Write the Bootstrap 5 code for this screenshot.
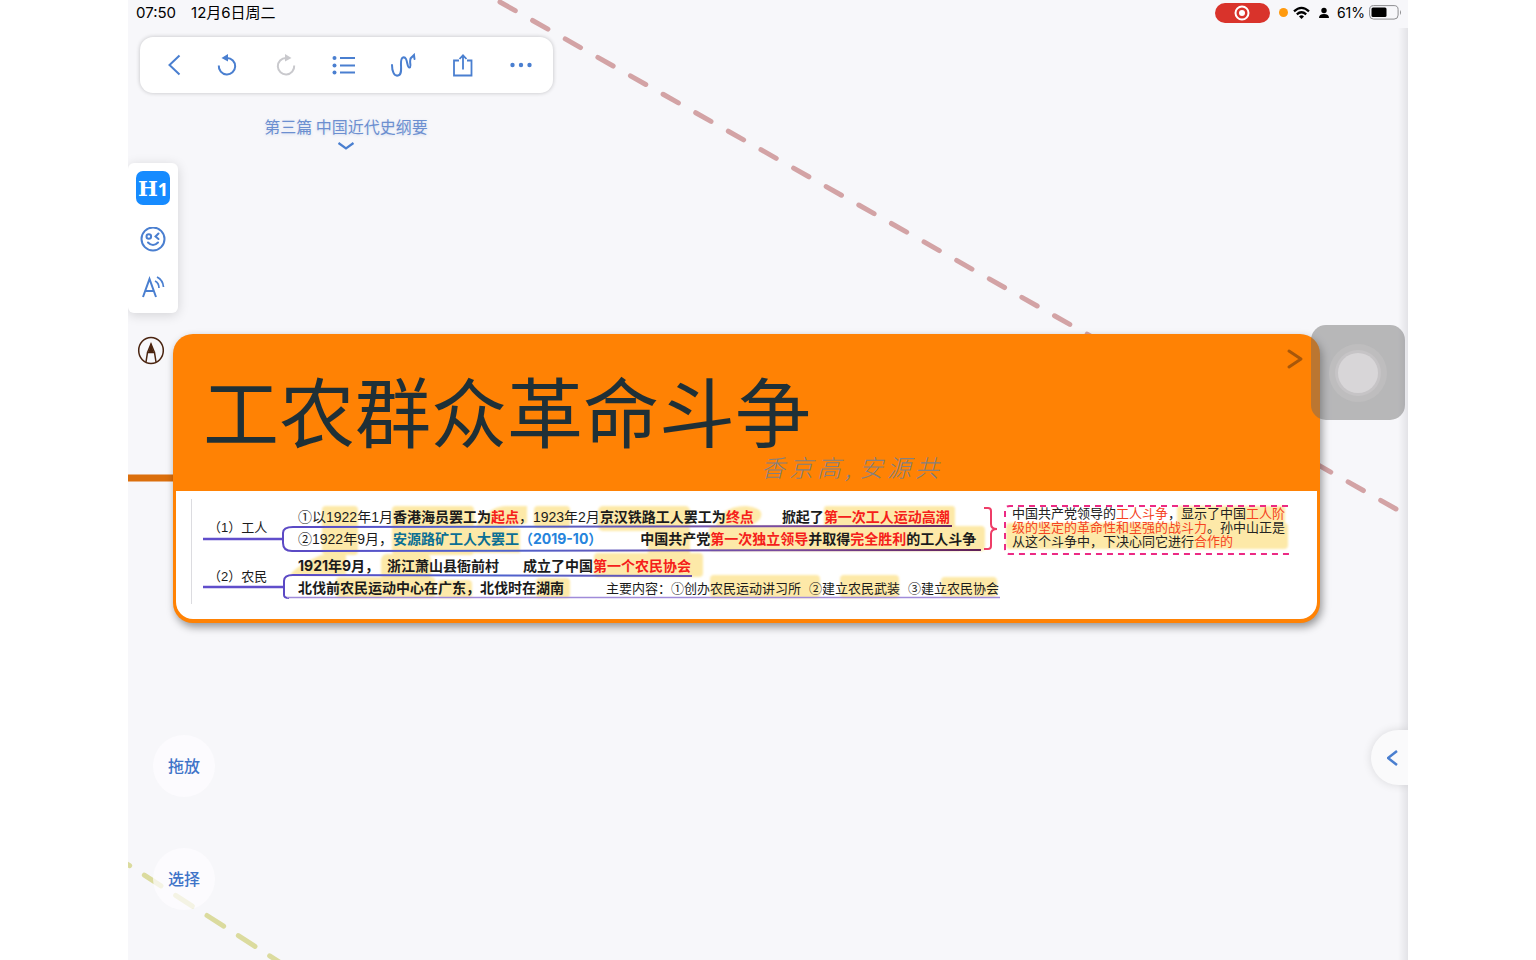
<!DOCTYPE html>
<html lang="zh-CN">
<head>
<meta charset="utf-8">
<meta name="viewport" content="width=device-width, initial-scale=1">
<title>第三篇 中国近代史纲要</title>
<link href="https://cdn.jsdelivr.net/npm/bootstrap@5.3.0/dist/css/bootstrap.min.css" rel="stylesheet">
<style>
  :root { --ink: #4a7fd0; --node: #ff8204; --marker: #fde9a8; }
  body { font-family: "Liberation Sans", "Noto Sans CJK SC", sans-serif; background: #fff; }
  svg { display: block; }
  .board { background: #f7f7fa; overflow: hidden; }
  .board-edge { top: 28px; right: 0; bottom: 0; width: 10px; background: linear-gradient(to left, #e3e3e7, #f7f7fa00); }
  .links { inset: 0; width: 100%; height: 100%; pointer-events: none; }
  .bare { border: 0; background: none; padding: 0; line-height: 1; color: var(--ink); }

  .status { font-family: Inter, "Noto Sans CJK SC", sans-serif; font-size: 14px; line-height: 25px; color: #000; padding: 0 6px 0 8px; }
  .clock { font-size: 15px; gap: 15px; }
  .rec { width: 55px; height: 20px; background: #d9332b; }
  .mic { width: 9px; height: 9px; margin-left: 9px; background: #ff9a0e; }

  .tools { width: 413px; height: 56px; margin: 12px 0 0 12px; padding: 0 20px 0 17px; background: #fff; border-radius: 13px; box-shadow: 0 0 4px #00000038; }
  .doc-title { width: 170px; margin: 23px 0 0 133px; font-size: 16px; line-height: 20px; color: #6c8fd0; text-shadow: 0 1px 3px #6c8fd040; font-family: "Noto Sans CJK SC", sans-serif; }
  .rail { width: 50px; height: 150px; margin-top: 9px; padding: 8px 0 13px; background: #fff; border-radius: 6px; box-shadow: 0 2px 12px #00000026; }
  .h1-key { width: 34px; height: 34px; border-radius: 7px; background: #168bff; color: #fff; font-family: "DejaVu Serif", serif; font-weight: 700; font-size: 21px; }
  .h1-key small { font-family: "Open Sans", sans-serif; font-weight: 700; font-size: 18px; }
  .pen { margin: 23px 0 0 9px; }

  .topic { left: 45px; right: 88px; top: 334px; background: var(--node); border-radius: 20px; padding: 0 3px 4px; box-shadow: 2px 4px 8px #00000066; }
  .topic-head { height: 157px; padding: 20px 27px 0; }
  .topic-head h1 { font-family: "Noto Sans CJK SC", sans-serif; font-weight: 400; font-size: 76px; line-height: 110px; color: #1f3037; }
  .fold { top: 14px; right: 16px; color: #a8570a; }
  .scribble { left: 588px; top: 117px; gap: 4px; font-family: "Noto Sans CJK SC", sans-serif; font-weight: 300; font-style: italic; font-size: 24px; line-height: 32px; color: #85807f; }
  .scribble .pause { width: 10px; }
  .topic-body { height: 128px; background: #fff; border-radius: 0 0 17px 17px; color: #1b1b1b; }
  .paper { left: 0; top: 0; width: 1141px; height: 128px; }
  .notes { padding: 15px 0 0 27px; white-space: nowrap; font-size: 14px; line-height: 22px; }
  .labels { width: 95px; line-height: 24px; font-size: 13px; }
  .labels div { height: 49px; padding: 10px 0 0 5px; }
  .facts { width: 706px; }
  .facts div { height: 22px; }
  .facts .late { margin-top: 5px; }
  .facts .fine { font-size: 13px; }
  .facts b, .strong { font-weight: 700; }
  .wide-num { font-family: Inter, "Noto Sans CJK SC", sans-serif; }
  .gap-s { margin-left: 8px; }
  .gap-m { margin-left: 24px; }
  .gap-l { margin-left: 28px; }
  .gap-xl { margin-left: 38px; }
  .hot { color: #f5201a; }
  .sea { color: #0b6f94; }
  .sky { color: #2584dd; }
  .aside { font-size: 13px; line-height: 14px; padding: 1px 0 0 8px; color: #222; }
  .aside .hot { color: #f5431f; }

  .assist { right: 3px; top: 325px; width: 94px; height: 95px; border-radius: 15px; background: #68686873; }
  .assist span { width: 40px; height: 40px; background: #d8d6d8; box-shadow: 0 0 0 3px #c6c4c6, 0 0 0 9px #bebdbe; }
  .round { width: 62px; height: 62px; background: #fdfcffb8; color: #3f74c8; font-family: "Noto Sans CJK SC", sans-serif; font-size: 16px; font-weight: 500; padding-bottom: 2px; }
  .acts { left: 25px; bottom: 50px; gap: 51px; }
  .drawer { right: 0; top: 730px; width: 37px; height: 55px; border-radius: 28px 0 0 28px; background: #fafafb; box-shadow: 0 0 10px #0000001f; }
</style>
</head>
<body>
<div class="row g-0 justify-content-center">
<main class="board col-10 position-relative vh-100">
  <svg class="links position-absolute" fill="none" stroke-linecap="round">
    <line x1="372" y1="2" x2="1268" y2="509" stroke="#d3a3a5" stroke-width="5" pathLength="879" stroke-dasharray="15 17"/>
    <line x1="-15" y1="855" x2="173" y2="976" stroke="#dbdb9e" stroke-width="5" pathLength="192" stroke-dasharray="17 15"/>
    <path d="M0 478H48" stroke="#db6f0c" stroke-width="7"/>
  </svg>

  <header class="status d-flex align-items-center position-relative">
    <div class="clock d-flex"><span>07:50</span><span>12月6日周二</span></div>
    <span class="rec rounded-pill ms-auto d-flex align-items-center justify-content-center">
      <svg width="16" height="16" fill="none" stroke="#fff" stroke-width="2"><circle cx="8" cy="8" r="6.5"/><circle cx="8" cy="8" r="3" fill="#fff" stroke="none"/></svg>
    </span>
    <span class="mic rounded-circle"></span>
    <svg class="ms-1" width="19" height="14" viewBox="0 0 19 14" fill="none" stroke="#000" stroke-width="2.2"><path d="M2 5.400Q9.500-1.600 17 5.400M4.800 8.400Q9.500 4.100 14.200 8.400"/><path d="M7 10.400Q9.500 8.300 12 10.400L9.500 13Z" fill="#000" stroke="none"/></svg>
    <svg class="ms-2" width="10" height="12" viewBox="0 0 10 12"><circle cx="5" cy="3.500" r="2.700"/><path d="M0 11Q0 7 5 7T10 11Z"/></svg>
    <span class="ms-1 ps-1">61%</span>
    <svg class="ms-1" width="33" height="15" viewBox="0 0 33 15"><rect x=".6" y=".6" width="28.500" height="13.500" rx="4" fill="none" stroke="#8d8d90"/><rect x="2.500" y="2.500" width="15" height="9.500" rx="1.500"/><path d="M31 5Q33 7.300 31 10Z" fill="#8d8d90"/></svg>
  </header>

  <nav class="tools d-flex align-items-center justify-content-between position-relative" aria-label="工具栏">
    <button class="bare" aria-label="返回"><svg width="24" height="24" fill="none" stroke="currentColor" stroke-width="2"><path d="M22.500 2.500 12.500 12 22.500 21.500"/></svg></button>
    <button class="bare" aria-label="撤销"><svg width="24" height="24" fill="none" stroke="currentColor" stroke-width="2"><path d="M3.800 12.500A8.200 8.200 0 1 0 12 5H10"/><path d="M13 1V8.500L6.500 5Z" fill="currentColor" stroke="none"/></svg></button>
    <button class="bare" aria-label="重做" style="color:#c9c9cd"><svg width="24" height="24" fill="none" stroke="currentColor" stroke-width="2"><path d="M20.200 12.500A8.200 8.200 0 1 1 12 5H14"/><path d="M11 1V8.500L17.500 5Z" fill="currentColor" stroke="none"/></svg></button>
    <button class="bare" aria-label="大纲"><svg width="24" height="24" stroke="currentColor" stroke-width="2"><path d="M8 5H23M8 12.500H23M8 19.500H23"/><g fill="currentColor" stroke="none"><circle cx="2.500" cy="5" r="2"/><circle cx="2.500" cy="12.500" r="2"/><circle cx="2.500" cy="19.500" r="2"/></g></svg></button>
    <button class="bare" aria-label="手写"><svg width="26" height="24" fill="none" stroke="currentColor" stroke-width="2" stroke-linecap="round"><path d="M2 12C2 18 4 23.500 8 22.500C14.500 21 8 6 13 4.500C18 3 16.500 15 19.500 14.500C22.500 14 17 5 23 3.500M20.500 5.500 24 2 24.500 6"/></svg></button>
    <button class="bare" aria-label="分享"><svg width="24" height="24" fill="none" stroke="currentColor" stroke-width="1.800"><path d="M8 7.500H3V22.500H20.500V7.500H16M12 16.500V2.500M8.500 6 12 2.300 15.500 6"/></svg></button>
    <button class="bare" aria-label="更多"><svg width="24" height="24" fill="currentColor"><circle cx="3.500" cy="12" r="2.200"/><circle cx="12" cy="12" r="2.200"/><circle cx="20.500" cy="12" r="2.200"/></svg></button>
  </nav>

  <button class="bare doc-title d-block text-nowrap position-relative">第三篇 中国近代史纲要
    <svg class="mx-auto" width="18" height="18" fill="none" stroke="#4a7fd0" stroke-width="2.200"><path d="M1.500 7 9 12.500 16.500 7"/></svg>
  </button>

  <aside class="rail d-flex flex-column align-items-center justify-content-between position-relative">
    <button class="bare h1-key text-nowrap" aria-label="一级标题">H<small>1</small></button>
    <button class="bare" aria-label="表情"><svg width="26" height="26" fill="none" stroke="currentColor" stroke-width="2"><circle cx="13" cy="12" r="11.500"/><circle cx="8.800" cy="9.500" r="2.300"/><path d="M18.500 6.500 15.500 9.500 18.500 12M8 15.500Q13 20.500 18 15.500" stroke-linecap="round"/></svg></button>
    <button class="bare" aria-label="朗读"><svg width="26" height="26" fill="none" stroke="currentColor" stroke-width="2"><path d="M3 23 9.500 5 16 23M5.500 17H13.500"/><path d="M15 7Q19 9 19 14M17 3Q23 6 23.500 13" stroke-width="1.700"/></svg></button>
  </aside>

  <button class="bare pen d-block position-relative" aria-label="画笔"><svg width="28" height="29" fill="none" stroke="#4a2410" stroke-width="1.500"><ellipse cx="14" cy="14.500" rx="12.300" ry="13"/><path d="M9 26 10.500 16.500H17.500L19 26M10.500 16.500 14 8 17.500 16.500"/><path d="M14 7 16.500 16H11.500Z" fill="#4a2410" stroke="none"/></svg></button>

  <article class="topic position-absolute">
    <div class="topic-head"><h1 class="m-0 text-nowrap">工农群众革命斗争</h1></div>
    <button class="bare fold position-absolute" aria-label="展开"><svg width="18" height="22" fill="none" stroke="currentColor" stroke-width="3" stroke-linecap="round" stroke-linejoin="round"><path d="M3 3 15 11 3 19"/></svg></button>
    <div class="scribble position-absolute d-flex"><span>香</span><span>京</span><span>高</span><span class="pause">,</span><span>安</span><span>源</span><span>共</span></div>
    <div class="topic-body position-relative">
      <svg class="paper position-absolute" fill="none">
        <defs><filter id="soft" x="-5%" y="-5%" width="110%" height="110%"><feGaussianBlur stdDeviation="1"/></filter>
        <linearGradient id="rule" gradientUnits="userSpaceOnUse" x1="100" x2="824" y1="0" y2="0"><stop stop-color="#5c48c4"/><stop offset=".3" stop-color="#4e63cf"/><stop offset=".7" stop-color="#7a4a9e"/><stop offset="1" stop-color="#5d1b50"/></linearGradient></defs>
        <path d="M15.500 8V113" stroke="#dcdce0"/>
        <g fill="#fde9a8" filter="url(#soft)">
          <rect x="146" y="15" width="36" height="49" rx="4"/><rect x="216" y="15" width="82" height="49" rx="4"/><path d="M298 38Q312 15 330 15H351V32L326 38V62H298Z"/>
          <rect x="358" y="15" width="36" height="22" rx="4"/><rect x="422" y="15" width="92" height="25" rx="5"/><path d="M540 35Q545 15 570 15Q590 17 584 28Q575 38 550 39Z"/>
          <rect x="648" y="15" width="131" height="22" rx="3"/><rect x="298" y="38" width="46" height="24"/><rect x="472" y="38" width="42" height="24"/><rect x="533" y="35" width="276" height="25" rx="4"/>
          <path d="M114 84Q120 75 145 64H170V84Z"/><rect x="205" y="63" width="50" height="26" rx="6"/><rect x="418" y="62" width="109" height="24" rx="4"/>
          <rect x="160" y="86" width="99" height="21" rx="4"/><rect x="262" y="89" width="34" height="18" rx="4"/><rect x="360" y="87" width="34" height="20" rx="4"/>
          <rect x="534" y="84" width="110" height="23" rx="4"/><rect x="664" y="84" width="59" height="23" rx="4"/><rect x="765" y="86" width="56" height="20" rx="4"/>
          <rect x="1001" y="15" width="108" height="20" rx="3"/><rect x="830" y="32" width="282" height="26" rx="4"/>
        </g>
        <g stroke="url(#rule)" stroke-width="2"><path d="M27 48H107M27 96H107" stroke="#604ecb" stroke-width="2.500"/><path d="M776 35 117 36Q107 36 107 42V52Q107 60 116 60L805 59M516 85 117 84Q108 84 108 90V104Q108 107 113 107"/><path d="M111 106.500H824" stroke="#a08bd9" stroke-width="1.500"/></g>
        <path d="M808 17H812Q815 17 815 20V33Q815 38 821 38Q815 38 815 43V55Q815 58 812 58H808" stroke="#ee3d67" stroke-width="2"/>
        <path d="M1112 15H834Q829 15 829 20V59Q829 63 834 63H1114" stroke="#ec2a84" stroke-width="2" stroke-dasharray="6 5"/>
      </svg>
      <div class="notes d-flex position-relative">
        <div class="labels"><div>（1）工人</div><div>（2）农民</div></div>
        <div class="facts">
          <div>①以1922年1月<b>香港海员罢工为<span class="hot">起点</span></b>，1923年2月<span class="strong">京汉铁路工人罢工为<span class="hot">终点</span><span class="gap-l">掀起了</span><span class="hot">第一次工人运动高潮</span></span></div>
          <div>②1922年9月，<b><span class="sea">安源路矿工人大罢工</span><span class="sky wide-num">（2019-10）</span><span class="gap-xl">中国共产党</span><span class="hot">第一次独立领导</span>并取得<span class="hot">完全胜利</span>的工人斗争</b></div>
          <div class="late strong wide-num">1921年9月，<span class="gap-s">浙江萧山县衙前村</span><span class="gap-m">成立了中国</span><span class="hot">第一个农民协会</span></div>
          <div><b>北伐前农民运动中心在广东，北伐时在湖南</b><span class="fine"><span class="gap-xl ps-1">主要内容：①创办农民运动讲习所</span><span class="gap-s">②建立农民武装</span><span class="gap-s">③建立农民协会</span></span></div>
        </div>
        <p class="aside m-0">中国共产党领导的<span class="hot">工人斗争</span>，显示了中国<span class="hot">工人阶<br>级的坚定的革命性和坚强的战斗力</span>。孙中山正是<br>从这个斗争中，下决心同它进行<span class="hot">合作的</span></p>
      </div>
    </div>
  </article>

  <div class="board-edge position-absolute"></div>
  <button class="bare assist position-absolute d-flex align-items-center justify-content-center" aria-label="辅助触控"><span class="rounded-circle"></span></button>
  <div class="acts position-absolute d-flex flex-column">
    <button class="bare round rounded-circle">拖放</button>
    <button class="bare round rounded-circle">选择</button>
  </div>
  <button class="bare drawer position-absolute" aria-label="打开侧栏"><svg class="ms-3" width="14" height="18" fill="none" stroke="currentColor" stroke-width="2.500"><path d="M10 2 1 9 10 16"/></svg></button>
</main>
</div>
<script src="https://cdn.jsdelivr.net/npm/bootstrap@5.3.0/dist/js/bootstrap.bundle.min.js"></script>
</body>
</html>
